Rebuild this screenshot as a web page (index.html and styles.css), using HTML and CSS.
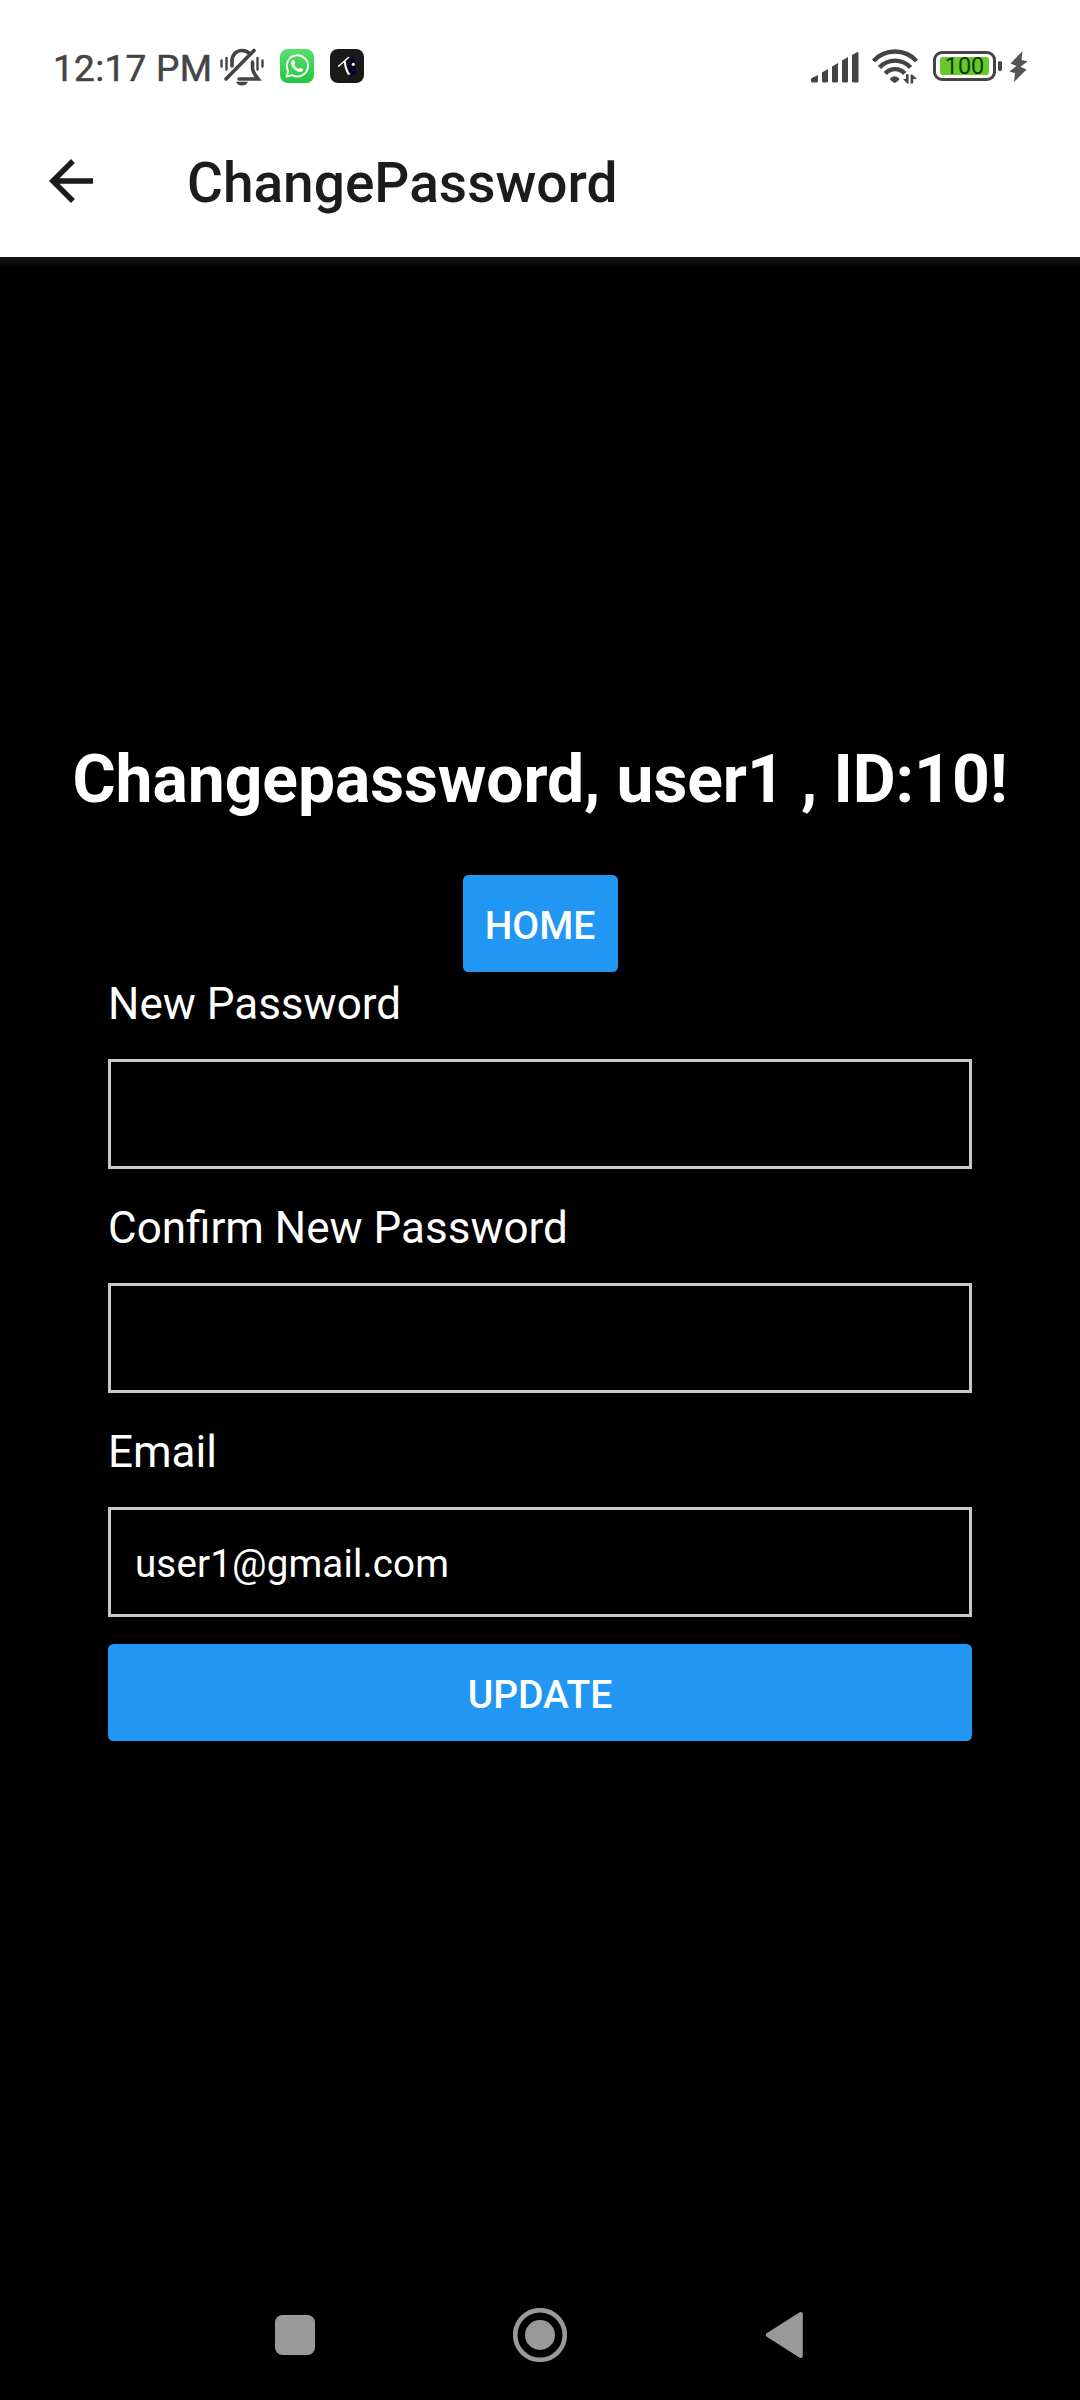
FILE: index.html
```
<!DOCTYPE html>
<html lang="en">
<head>
<meta charset="utf-8">
<title>ChangePassword</title>
<link rel="stylesheet" href="styles.css">
</head>
<body>
<div class="screen">
  <div class="status-bar">
    <div class="status-left">
      <span class="clock">12:17 PM</span>
      <svg class="icon-bell" width="44" height="38" viewBox="0 0 44 38" fill="none" stroke="#444" stroke-width="3.6" stroke-linecap="round">
        <path d="M12 18V13.500C12 7 16 2.500 22 2.500C25.500 2.500 28 3.800 30 6M32.500 14V20C32.500 24 35 27 38.200 31H19"/>
        <path d="M6 31L34 2.500"/>
        <path d="M1.500 12.500V18.500M6.500 10V21.500M37.500 10V21.500M42.500 12.500V18.500" stroke-width="2.400"/>
        <path d="M16 33.800H28C26.800 36.500 24.600 37.600 22 37.600S17.200 36.500 16 33.800Z" fill="#444" stroke="none"/>
      </svg>
      <svg class="icon-chat" width="34" height="34" viewBox="0 0 34 34">
        <defs><linearGradient id="chat-green" x1="0" y1="0" x2="0" y2="1"><stop offset="0" stop-color="#57e06e"/><stop offset="1" stop-color="#25c63f"/></linearGradient></defs>
        <rect width="34" height="34" rx="8" fill="url(#chat-green)"/>
        <path d="M6.600 27.600L8.200 22.100A10.600 10.600 0 1 1 12.200 26.100Z" fill="none" stroke="#fff" stroke-width="1.900" stroke-linejoin="round"/>
        <path d="M12.300 11.500C13 10.800 14 10.800 14.400 11.700L15.200 13.700C15.500 14.500 14.300 15.400 14.200 15.800C15.200 17.900 16.600 19.200 18.700 20.100C19.300 20 20.100 18.600 20.700 18.800L22.900 19.900C23.600 20.300 23.200 21.600 22.500 22.200C21.300 23.200 19.700 23.200 18 22.500C14.800 21.200 12.700 18.900 11.500 16.200C10.800 14.400 11.200 12.500 12.300 11.500Z" fill="#fff"/>
      </svg>
      <svg class="icon-app" width="34" height="34" viewBox="0 0 34 34">
        <rect width="34" height="34" rx="8" fill="#19191a"/>
        <path d="M16.500 9L24.500 9.500L26.500 24L20 27.500Z" fill="#03032a"/>
        <path d="M8.500 17.300L18.500 8.500" fill="none" stroke="#fff" stroke-width="1.500" stroke-linecap="round"/>
        <path d="M13.800 12.500L15.600 11.200C15.800 16 17.200 21 20.400 25.600L18 26C15.600 22.500 14.200 17.500 13.800 12.500Z" fill="#fff"/>
        <circle cx="23.300" cy="15.300" r="1.600" fill="#fff"/>
      </svg>
    </div>
    <div class="status-right">
      <svg class="icon-signal" width="48" height="31" viewBox="0 0 48 31" fill="#444">
        <path d="M0 26.500L7 23V29Q7 30.500 5.500 30.500H1.500Q0 30.500 0 29Z"/>
        <path d="M11 20.500L17 17V29Q17 30.500 15.500 30.500H12.500Q11 30.500 11 29Z"/>
        <path d="M21 14.500L27 11V29Q27 30.500 25.500 30.500H22.500Q21 30.500 21 29Z"/>
        <path d="M31 8.500L37 5V29Q37 30.500 35.500 30.500H32.500Q31 30.500 31 29Z"/>
        <path d="M41 3L46 .2Q47.500 -.2 47.500 1.500V29Q47.500 30.500 46 30.500H42.500Q41 30.500 41 29Z"/>
      </svg>
      <svg class="icon-wifi" width="46" height="36" viewBox="0 0 46 36">
        <g fill="none" stroke="#444" stroke-width="4.400">
          <path d="M1.500 12A29 29 0 0 1 44.500 12"/>
          <path d="M7.500 18.500A21 21 0 0 1 38.500 18.500"/>
          <path d="M13.300 24.500A13 13 0 0 1 32.700 24.500"/>
        </g>
        <path d="M18.300 29.200Q22.500 25.500 27 29.200Q27.800 30.300 27 31L23.800 33.600Q22.700 34.200 21.600 33.600L18.400 31Q17.400 30.200 18.300 29.200Z" fill="#444"/>
        <path d="M36.600 25.200V34.500H35L31 30H34V25.200ZM38.600 34.500V25.500H40.200L45 30H41.200V34.500Z" fill="#444"/>
      </svg>
      <div class="battery"><div class="battery-level">100</div></div>
      <div class="battery-tip"></div>
      <svg class="icon-bolt" width="19" height="31" viewBox="0 0 19 31"><path d="M13.500 0L1.500 12.500L7.500 15L.3 20.500L6 22L5 31L17.500 18.500L11.500 15.800L18.700 10.300L12.500 9Z" fill="#555"/></svg>
    </div>
  </div>

  <header class="app-bar">
    <svg width="66" height="66" viewBox="0 0 24 24" fill="#1c1c1e"><path d="M20 11H7.830l5.590-5.590L12 4l-8 8 8 8 1.410-1.410L7.830 13H20v-2z"/></svg>
    <h1 class="app-title">ChangePassword</h1>
  </header>

  <main class="content">
    <h2 class="greeting">Changepassword, user1 , ID:10!</h2>
    <button class="button button-home">HOME</button>
    <form class="form">
      <label class="field"><span class="label">New Password</span><input class="input" type="password"></label>
      <label class="field"><span class="label">Confirm New Password</span><input class="input" type="password"></label>
      <label class="field"><span class="label">Email</span><input class="input" type="text" value="user1@gmail.com"></label>
      <button class="button button-update" type="button">UPDATE</button>
    </form>
  </main>

  <nav class="nav-bar">
    <svg width="54" height="54" viewBox="0 0 54 54"><rect x="7" y="7" width="40" height="40" rx="7.500" fill="#999"/></svg>
    <svg width="54" height="54" viewBox="0 0 54 54"><circle cx="27" cy="27" r="24.800" fill="none" stroke="#999" stroke-width="4.600"/><circle cx="27" cy="27" r="15" fill="#999"/></svg>
    <svg width="54" height="54" viewBox="0 0 54 54"><path d="M10 27L43 6V48Z" transform="translate(-.2 0)" fill="#999" stroke="#999" stroke-width="4" stroke-linejoin="round"/></svg>
  </nav>
</div>
</body>
</html>
```
FILE: styles.css
```
* { box-sizing: border-box; }

body {
  margin: 0;
  background: #000;
  font-family: Roboto, "Noto Sans", sans-serif;
}

svg { display: block; flex: none; }

.screen {
  width: 1080px;
  height: 2400px;
  display: flex;
  flex-direction: column;
  background: #000;
}

.status-bar {
  height: 104px;
  padding: 48px 52px 0 53px;
  display: flex;
  justify-content: space-between;
  align-items: flex-start;
  background: #fff;
}

.status-left, .status-right { display: flex; align-items: flex-start; }

.clock {
  width: 167px;
  padding-top: 1px;
  font-size: 37px;
  line-height: 40px;
  letter-spacing: 0.3px;
  white-space: nowrap;
  color: #444;
  -webkit-text-stroke: 0.5px #444;
}

.icon-chat { margin: 1px 0 0 16px; }
.icon-app { margin: 1px 0 0 16px; }
.icon-signal { margin-top: 4px; }
.icon-wifi { margin: 1px 0 0 13px; }

.battery {
  width: 63px;
  height: 30px;
  margin: 3px 0 0 15px;
  padding: 4px;
  border: 3px solid #444;
  border-radius: 9px;
}

.battery-level {
  height: 18px;
  width: 49px;
  margin-top: -1px;
  border-radius: 3px;
  background: #68c92d;
  color: #123c05;
  font-size: 23.5px;
  line-height: 19px;
  text-align: center;
}

.battery-tip {
  width: 4px;
  height: 10px;
  margin: 13px 0 0 2px;
  border-radius: 2px;
  background: #444;
}

.icon-bolt { margin: 3px 0 0 7px; }

.app-bar {
  height: 153px;
  padding: 0 38px;
  display: flex;
  align-items: center;
  gap: 83px;
  background: #fff;
}

.app-title {
  margin: 5px 0 0;
  font-size: 55px;
  line-height: 66px;
  font-weight: 500;
  color: #1c1c1e;
}

.content {
  flex: 1;
  padding: 484px 0 0;
  display: flex;
  flex-direction: column;
  align-items: center;
  background: linear-gradient(#141616, #000 11px);
}

.greeting {
  margin: 0 0 56px;
  font-size: 66px;
  line-height: 78px;
  font-weight: 700;
  letter-spacing: -0.07px;
  white-space: nowrap;
  color: #fff;
}

.button {
  height: 97px;
  padding: 4px 20px 0;
  border: 0;
  border-radius: 5.5px;
  background: #2196f3;
  color: #fff;
  font: 500 39px/46px Roboto, "Noto Sans", sans-serif;
}

.button-home { width: 155px; }

.form {
  width: 864px;
  margin-top: 6px;
  display: flex;
  flex-direction: column;
  gap: 33px;
}

.field { display: flex; flex-direction: column; gap: 29px; }

.label { font-size: 44px; line-height: 52px; color: #fff; }

.input {
  width: 100%;
  height: 110px;
  padding: 3px 24px 0;
  border: 3px solid #c8c8c8;
  border-radius: 0;
  outline: 0;
  background: #000;
  color: #fff;
  font: 400 38.5px/46px Roboto, "Noto Sans", sans-serif;
  letter-spacing: 0.15px;
}

.button-update { margin-top: -6px; }

.nav-bar {
  height: 130px;
  padding: 38px 0 0 268px;
  display: flex;
  gap: 191px;
}
```
